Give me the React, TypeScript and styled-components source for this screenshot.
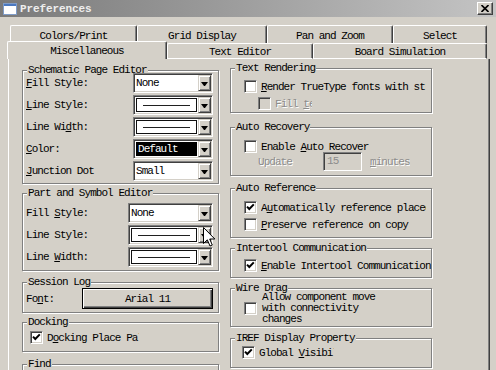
import * as React from 'react';
import styled, { createGlobalStyle } from 'styled-components';

const face = '#d4d0c8';
const shadow = '#808080';
const dark = '#404040';
const mono = `"Liberation Mono", "DejaVu Sans Mono", monospace`;

const GlobalStyle = createGlobalStyle`
    html, body {
        margin: 0;
        padding: 0;
        background: ${face};
    }
    body {
        width: 496px;
        height: 370px;
        overflow: hidden;
        font-family: ${mono};
        font-size: 11px;
        letter-spacing: -0.95px;
        color: #000;
    }
`;

const Window = styled.div`
    position: relative;
    width: 496px;
    height: 370px;
    overflow: hidden;
    background: ${face};
`;
const TitleBar = styled.div`
    height: 17px;
    display: flex;
    align-items: center;
    padding: 0 3px;
    background: linear-gradient(90deg, #7a7a7a, #c4c4c4);
`;
const TitleText = styled.span`
    flex: 1;
    margin-left: 3px;
    font-size: 11px;
    font-weight: bold;
    letter-spacing: -0.1px;
    color: #eeeeee;
`;
const CloseButton = styled.div`
    width: 16px;
    height: 13px;
    box-sizing: border-box;
    display: flex;
    align-items: center;
    justify-content: center;
    background: ${face};
    border: 1px solid;
    border-color: #fff ${dark} ${dark} #fff;
    box-shadow: inset -1px -1px ${shadow};
`;
const Body = styled.div`
    padding: 8px 0 0 7px;
`;
const TabRow = styled.div<{ $indent: number; $h: number }>`
    display: flex;
    height: ${p => p.$h}px;
    padding-left: ${p => p.$indent}px;
`;
const Tab = styled.div<{ $w: number; $front?: boolean; $active?: boolean }>`
    width: ${p => p.$w}px;
    height: ${p => (p.$active ? 18 : p.$front ? 16 : 18)}px;
    margin-top: ${p => (p.$active ? -2 : 0)}px;
    box-sizing: border-box;
    display: flex;
    align-items: center;
    justify-content: center;
    padding-top: ${p => (p.$active ? 0 : 2)}px;
    background: ${face};
    border-top: 1px solid #fff;
    border-left: 1px solid #fff;
    border-right: 1px solid ${dark};
    border-bottom: ${p => (p.$front && !p.$active ? '1px solid #fff' : 'none')};
    box-shadow: inset -1px 0 ${shadow};
    border-radius: 2px 2px 0 0;
    white-space: nowrap;
`;
const Panel = styled.div`
    margin-left: 1px;
    width: 482px;
    height: 320px;
    box-sizing: border-box;
    display: flex;
    gap: 11px;
    padding-left: 13px;
    border-left: 1px solid #fff;
    border-right: 1px solid ${dark};
    box-shadow: inset -1px 0 ${shadow};
`;
const Column = styled.div<{ $w: number }>`
    width: ${p => p.$w}px;
    display: flex;
    flex-direction: column;
`;
const Group = styled.div<{ $mt: number; $h: number }>`
    flex-shrink: 0;
    box-sizing: border-box;
    margin-top: ${p => p.$mt}px;
    height: ${p => p.$h}px;
    display: flex;
    flex-direction: column;
    border: 1px solid ${shadow};
    box-shadow: inset 1px 1px #fff, 1px 1px #fff;
`;
const Legend = styled.span`
    align-self: flex-start;
    height: 10px;
    line-height: 10px;
    margin: -6px 0 -4px 4px;
    padding: 0 1px;
    background: ${face};
    white-space: nowrap;
`;
const GroupBody = styled.div<{ $pt: number; $pl?: number }>`
    display: flex;
    flex-direction: column;
    padding: ${p => p.$pt}px 5px 0 ${p => p.$pl ?? 3}px;
`;
const FieldRow = styled.div<{ $h?: number }>`
    display: flex;
    align-items: center;
    justify-content: space-between;
    height: ${p => p.$h ?? 22}px;
    white-space: nowrap;
`;
const Key = styled.span`
    text-decoration: underline;
    text-underline-offset: 1px;
`;
const Combo = styled.div<{ $w: number }>`
    width: ${p => p.$w}px;
    height: 20px;
    box-sizing: border-box;
    display: flex;
    padding: 1px;
    background: #fff;
    border: 1px solid;
    border-color: ${shadow} #fff #fff ${shadow};
    box-shadow: inset 1px 1px ${dark}, inset -1px -1px ${face};
`;
const Field = styled.div<{ $kind: 'text' | 'selected' | 'line' }>`
    flex: 1;
    display: flex;
    align-items: center;
    padding: ${p => (p.$kind === 'text' ? '0 0 0 1px' : '1px')};
    color: ${p => (p.$kind === 'selected' ? '#fff' : '#000')};
`;
const Highlight = styled.div`
    flex: 1;
    align-self: stretch;
    display: flex;
    align-items: center;
    padding-left: 2px;
    background: #000;
`;
const LineSample = styled.div`
    flex: 1;
    align-self: stretch;
    display: flex;
    align-items: center;
    padding: 0 6px;
    border: 1px solid #101010;

    &::after {
        content: '';
        flex: 1;
        height: 1px;
        background: #202020;
    }
`;
const DropButton = styled.div`
    width: 13px;
    box-sizing: border-box;
    display: flex;
    align-items: center;
    justify-content: center;
    padding-top: 2px;
    background: ${face};
    border: 1px solid;
    border-color: ${face} ${dark} ${dark} ${face};
    box-shadow: inset 1px 1px #fff, inset -1px -1px ${shadow};

    &::after {
        content: '';
        width: 1px;
        height: 0;
        border-left: 3px solid transparent;
        border-right: 3px solid transparent;
        border-top: 4px solid #000;
    }
`;
const PushButton = styled.div<{ $w: number }>`
    width: ${p => p.$w}px;
    height: 21px;
    box-sizing: border-box;
    display: flex;
    align-items: center;
    justify-content: center;
    background: ${face};
    border: 1px solid #000;
    box-shadow: inset 1px 1px #fff, inset -1px -1px ${dark}, inset -2px -2px ${shadow};
`;
const CheckRow = styled.div<{ $ml: number; $h?: number; $gap?: number; $mt?: number }>`
    display: flex;
    align-items: center;
    gap: ${p => p.$gap ?? 4}px;
    height: ${p => p.$h ?? 17}px;
    margin: ${p => p.$mt ?? 0}px 0 0 ${p => p.$ml}px;
    white-space: nowrap;
`;
const Box = styled.span<{ $disabled?: boolean }>`
    flex-shrink: 0;
    width: 13px;
    height: 13px;
    box-sizing: border-box;
    display: flex;
    align-items: center;
    justify-content: center;
    background: ${p => (p.$disabled ? face : '#fff')};
    border: 1px solid;
    border-color: ${shadow} #fff #fff ${shadow};
    box-shadow: inset 1px 1px ${dark}, inset -1px -1px ${face};
`;
const Clip = styled.span<{ $w?: number; $muted?: boolean }>`
    display: inline-block;
    overflow: hidden;
    white-space: nowrap;
    width: ${p => (p.$w ? `${p.$w}px` : 'auto')};
    color: ${p => (p.$muted ? '#8c8c8c' : '#000')};
    text-shadow: ${p => (p.$muted ? '1px 1px #fff' : 'none')};
`;
const Lines = styled.div`
    line-height: 11px;
    white-space: pre;
`;
const UpdateLabel = styled.span`
    width: 65px;
    color: #8c8c8c;
    text-shadow: 1px 1px #fff;
`;
const TextBox = styled.div`
    width: 39px;
    height: 19px;
    box-sizing: border-box;
    padding: 2px 0 0 3px;
    margin-right: 8px;
    color: #8c8c8c;
    background: ${face};
    border: 1px solid;
    border-color: ${shadow} #fff #fff ${shadow};
    box-shadow: inset 1px 1px ${dark}, inset -1px -1px ${face};
`;
const Cursor = styled.svg`
    position: absolute;
    left: 203px;
    top: 227px;
`;

const Check = ({ on, disabled }: { on?: boolean; disabled?: boolean }) => (
    <Box $disabled={disabled}>
        {on && (
            <svg width="9" height="9" viewBox="0 0 9 9">
                <polyline points="1,3.6 3.3,6 7.8,1.4" fill="none" stroke="#000" strokeWidth="2" />
            </svg>
        )}
    </Box>
);

type ComboProps = { w: number; kind: 'text' | 'selected' | 'line'; value?: string };
const ComboBox = ({ w, kind, value }: ComboProps) => (
    <Combo $w={w}>
        <Field $kind={kind}>
            {kind === 'text' && value}
            {kind === 'selected' && <Highlight>{value}</Highlight>}
            {kind === 'line' && <LineSample />}
        </Field>
        <DropButton />
    </Combo>
);

const backTabs = [
    { name: 'Colors/Print', w: 127 },
    { name: 'Grid Display', w: 130 },
    { name: 'Pan and Zoom', w: 126 },
    { name: 'Select', w: 94 },
];
const frontTabs = [
    { name: 'Miscellaneous', w: 160, active: true },
    { name: 'Text Editor', w: 146 },
    { name: 'Board Simulation', w: 174 },
];

const App: React.FunctionComponent = () => (
    <Window>
        <GlobalStyle />
        <TitleBar>
            <svg width="14" height="12" viewBox="0 0 14 12">
                <rect x="0.5" y="0.5" width="13" height="11" fill="#fff" stroke="#7f9cc8" />
                <rect x="1" y="1" width="12" height="2" fill="#4a78c0" />
            </svg>
            <TitleText>Preferences</TitleText>
            <CloseButton>
                <svg width="8" height="7" viewBox="0 0 8 7">
                    <path d="M0.5 0 L7.5 7 M7.5 0 L0.5 7" stroke="#000" strokeWidth="1.6" />
                </svg>
            </CloseButton>
        </TitleBar>
        <Body>
            <TabRow $indent={3} $h={18}>
                {backTabs.map(t => (
                    <Tab key={t.name} $w={t.w}>
                        {t.name}
                    </Tab>
                ))}
            </TabRow>
            <TabRow $indent={0} $h={16}>
                {frontTabs.map(t => (
                    <Tab key={t.name} $w={t.w} $front $active={t.active}>
                        {t.name}
                    </Tab>
                ))}
            </TabRow>
            <Panel>
                <Column $w={197}>
                    <Group $mt={11} $h={114}>
                        <Legend>Schematic Page Editor</Legend>
                        <GroupBody $pt={1}>
                            <FieldRow>
                                <span><Key>F</Key>ill Style:</span>
                                <ComboBox w={80} kind="text" value="None" />
                            </FieldRow>
                            <FieldRow>
                                <span><Key>L</Key>ine Style:</span>
                                <ComboBox w={80} kind="line" />
                            </FieldRow>
                            <FieldRow>
                                <span>Line Wi<Key>d</Key>th:</span>
                                <ComboBox w={80} kind="line" />
                            </FieldRow>
                            <FieldRow>
                                <span><Key>C</Key>olor:</span>
                                <ComboBox w={80} kind="selected" value="Default" />
                            </FieldRow>
                            <FieldRow>
                                <span><Key>J</Key>unction Dot</span>
                                <ComboBox w={80} kind="text" value="Small" />
                            </FieldRow>
                        </GroupBody>
                    </Group>
                    <Group $mt={9} $h={78}>
                        <Legend>Part and Symbol Editor</Legend>
                        <GroupBody $pt={8}>
                            <FieldRow>
                                <span>Fill <Key>S</Key>tyle:</span>
                                <ComboBox w={85} kind="text" value="None" />
                            </FieldRow>
                            <FieldRow>
                                <span>Line Style:</span>
                                <ComboBox w={85} kind="line" />
                            </FieldRow>
                            <FieldRow>
                                <span>Line <Key>W</Key>idth:</span>
                                <ComboBox w={85} kind="line" />
                            </FieldRow>
                        </GroupBody>
                    </Group>
                    <Group $mt={11} $h={31}>
                        <Legend>Session Log</Legend>
                        <GroupBody $pt={5}>
                            <FieldRow $h={21}>
                                <span>Fo<Key>n</Key>t:</span>
                                <PushButton $w={131}>Arial 11</PushButton>
                            </FieldRow>
                        </GroupBody>
                    </Group>
                    <Group $mt={9} $h={30}>
                        <Legend>Docking</Legend>
                        <GroupBody $pt={6}>
                            <CheckRow $ml={4}>
                                <Check on />
                                <Clip $w={92}>D<Key>o</Key>cking Place Palettes</Clip>
                            </CheckRow>
                        </GroupBody>
                    </Group>
                    <Group $mt={12} $h={30}>
                        <Legend>Find</Legend>
                    </Group>
                </Column>
                <Column $w={202}>
                    <Group $mt={9} $h={45}>
                        <Legend>Text Rendering</Legend>
                        <GroupBody $pt={9} $pl={0}>
                            <CheckRow $ml={13}>
                                <Check />
                                <Clip $w={166}><Key>R</Key>ender TrueType fonts with stroke font</Clip>
                            </CheckRow>
                            <CheckRow $ml={27}>
                                <Check disabled />
                                <Clip $w={37} $muted>Fill <Key>t</Key>ext</Clip>
                            </CheckRow>
                        </GroupBody>
                    </Group>
                    <Group $mt={14} $h={49}>
                        <Legend>Auto Recovery</Legend>
                        <GroupBody $pt={10} $pl={0}>
                            <CheckRow $ml={13}>
                                <Check />
                                <span>Enable <Key>A</Key>uto Recover</span>
                            </CheckRow>
                            <CheckRow $ml={27} $h={19} $gap={0} $mt={-3}>
                                <UpdateLabel>Update</UpdateLabel>
                                <TextBox>15</TextBox>
                                <Clip $muted><Key>m</Key>inutes</Clip>
                            </CheckRow>
                        </GroupBody>
                    </Group>
                    <Group $mt={12} $h={50}>
                        <Legend>Auto Reference</Legend>
                        <GroupBody $pt={10} $pl={0}>
                            <CheckRow $ml={13}>
                                <Check on />
                                <Clip $w={166}>A<Key>u</Key>tomatically reference placed parts</Clip>
                            </CheckRow>
                            <CheckRow $ml={13}>
                                <Check />
                                <span><Key>P</Key>reserve reference on copy</span>
                            </CheckRow>
                        </GroupBody>
                    </Group>
                    <Group $mt={10} $h={30}>
                        <Legend>Intertool Communication</Legend>
                        <GroupBody $pt={8} $pl={0}>
                            <CheckRow $ml={13}>
                                <Check on />
                                <span><Key>E</Key>nable Intertool Communication</span>
                            </CheckRow>
                        </GroupBody>
                    </Group>
                    <Group $mt={10} $h={39}>
                        <Legend>Wire Drag</Legend>
                        <GroupBody $pt={3} $pl={0}>
                            <CheckRow $ml={13} $h={33} $gap={5}>
                                <Check />
                                <Lines>{'Allow component move\nwith connectivity\nchanges'}</Lines>
                            </CheckRow>
                        </GroupBody>
                    </Group>
                    <Group $mt={11} $h={30}>
                        <Legend>IREF Display Property</Legend>
                        <GroupBody $pt={5} $pl={0}>
                            <CheckRow $ml={11}>
                                <Check on />
                                <Clip $w={75}>Global <Key>V</Key>isibility</Clip>
                            </CheckRow>
                        </GroupBody>
                    </Group>
                </Column>
            </Panel>
        </Body>
        <Cursor width="13" height="20" viewBox="0 0 13 20">
            <path
                d="M0.5 0.5 L0.5 16.5 L4.3 12.8 L7 19 L9.3 18 L6.7 12 L11.8 12 Z"
                fill="#fff"
                stroke="#000"
                strokeWidth="1"
            />
        </Cursor>
    </Window>
);

export default App;
